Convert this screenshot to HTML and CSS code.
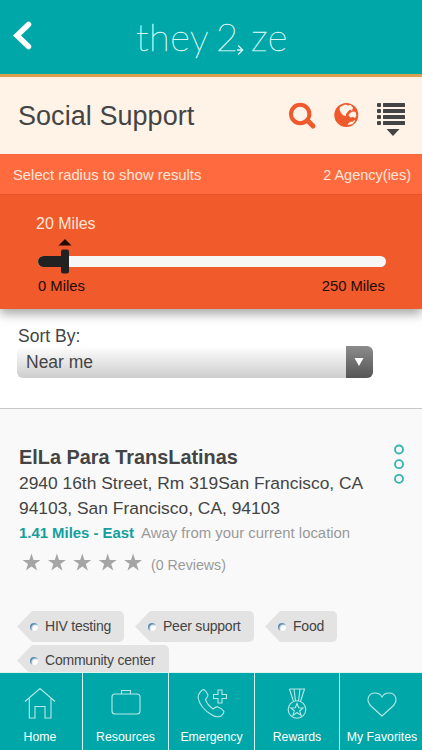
FILE: index.html
```html
<!DOCTYPE html>
<html lang="en">
<head>
<meta charset="utf-8">
<title>Social Support</title>
<link rel="stylesheet" href="styles.css">
</head>
<body>
<div class="app">
  <header class="top">
    <svg class="back" width="22" height="30" viewBox="0 0 22 30"><path d="M17.500 3.500 6 14.500 17.500 25.500" fill="none" stroke="#fff" stroke-width="5.500" stroke-linecap="round" stroke-linejoin="miter"/></svg>
    <div class="logo"><span class="l1">they</span><span class="l2">2</span><svg class="arrow" width="7" height="12" viewBox="0 0 7 12"><path d="M0 6H5.500M1.200 1.500 5.700 6 1.200 10.500" fill="none" stroke="#d5f4f2" stroke-width="1.300"/></svg><span class="l3">ze</span></div>
  </header>
  <section class="title">
    <h1>Social Support</h1>
    <svg class="tools" width="120" height="40" viewBox="0 0 120 40">
      <g fill="none" stroke="#ee5a2c" stroke-width="4"><circle cx="13.200" cy="15" r="9.200"/><path d="m20.500 21.500 5.500 5.500" stroke-width="5" stroke-linecap="round"/></g>
      <circle cx="59.300" cy="16" r="12" fill="#ee5a2c"/>
      <path fill="#fff3e8" d="m53 8 4-2 2-.5 1.500 1 3-.5 2.500 2.500-1 3.500-2-1.500-2 2-2 2.500 0 2-2.500-.5-2.500-2.500-1.500-3.500zM66 12.500l2.500.5 1 3.500-1.500 2.500-2-1-2.500.5-2-2 1.500-2.500zM60.500 25l2.500-2 3-.5 1.500-1.500.5 1-2.500 3-4 1z"/>
      <g fill="#444"><rect x="90" y="4" width="4" height="4" rx="1"/><rect x="96" y="4" width="22" height="4" rx=".5"/><rect x="90" y="10" width="4" height="4" rx="1"/><rect x="96" y="10" width="22" height="4" rx=".5"/><rect x="90" y="16" width="4" height="4" rx="1"/><rect x="96" y="16" width="22" height="4" rx=".5"/><rect x="90" y="22" width="4" height="4" rx="1"/><rect x="96" y="22" width="22" height="4" rx=".5"/><path d="M99.500 30h13l-6.500 7z"/></g>
    </svg>
  </section>
  <section class="radius">
    <div class="hint"><span>Select radius to show results</span><span class="count">2 Agency(ies)</span></div>
    <div class="range">
      <div class="value">20 Miles</div>
      <svg class="slider" width="350" height="37" viewBox="0 0 350 37"><path d="M21.500 7.500 28 1l6.500 6.500z" fill="#220c05"/><rect x="1" y="18" width="348" height="11" rx="5.500" fill="#f6f6f6"/><path d="M6.500 18H28v11H6.500a5.500 5.500 0 0 1 0-11z" fill="#222"/><rect x="24" y="11.500" width="8" height="24" rx="2" fill="#222"/></svg>
      <div class="ends"><span>0 Miles</span><span>250 Miles</span></div>
    </div>
  </section>
  <section class="sort">
    <label>Sort By:</label>
    <div class="select"><span>Near me</span><i><svg width="10" height="10" viewBox="0 0 10 10"><path d="M.5 1h9L5 9z" fill="#fff"/></svg></i></div>
  </section>
  <main class="card">
    <div class="info">
      <h2>ElLa Para TransLatinas</h2>
      <p class="addr">2940 16th Street, Rm 319San Francisco, CA<br>94103, San Francisco, CA, 94103</p>
      <p class="dist"><b>1.41 Miles - East</b><span>Away from your current location</span></p>
      <div class="rating">
        <svg width="124" height="20" viewBox="0 0 124 20"><defs><path id="s" d="m9 0 2.100 6.500H18l-5.500 4 2.100 6.500L9 13l-5.600 4 2.100-6.500L0 6.500h6.900z"/></defs><g fill="#a5a5a5"><use href="#s" x="3.500" y="2.500"/><use href="#s" x="28.900" y="2.500"/><use href="#s" x="54.300" y="2.500"/><use href="#s" x="79.700" y="2.500"/><use href="#s" x="105.100" y="2.500"/></g></svg>
        <span>(0 Reviews)</span>
      </div>
    </div>
    <svg class="more" width="12" height="42" viewBox="0 0 12 42"><g fill="none" stroke="#35b2b0" stroke-width="1.800"><circle cx="6" cy="6.500" r="4"/><circle cx="6" cy="21.200" r="4"/><circle cx="6" cy="35.800" r="4"/></g></svg>
    <div class="tags">
      <span class="tag t1"><i></i>HIV testing</span><span class="tag t2"><i></i>Peer support</span><span class="tag t3"><i></i>Food</span><span class="tag t4"><i></i>Community center</span>
    </div>
  </main>
  <nav>
    <a><svg viewBox="0 0 40 36"><path d="m5 15.500 15-13 15 13M9.300 12v20H15V20.500h10V32h6V12"/></svg><span>Home</span></a>
    <a><svg viewBox="0 0 40 36"><rect x="6" y="8" width="28" height="20" rx="3"/><path d="M15.500 8V4.500h9V8"/></svg><span>Resources</span></a>
    <a><svg viewBox="0 0 40 36"><path d="M8 6.500q1.500-2.500 3.500-3 2 .5 4.500 5.500 0 2-2.500 4.500 1.500 5 7.500 9.500 3-2.500 5-2 4 1.500 6 4.500 0 2-3 4.500-4 2-9-1Q8 22 6 11.500q0-3 2-5zM26 4h4v4.500h4.500v4H30V17h-4v-4.500h-4.500v-4H26z"/></svg><span>Emergency</span></a>
    <a><svg viewBox="0 0 40 36"><path d="M12.500 3h15l-4 12.500M12.500 3l4 12.500M17 3l1.500 12M23 3l-1.500 12"/><circle cx="20" cy="23.500" r="8.800"/><path d="m20 17.500 1.700 4.200 4.500.2-3.500 2.900 1.300 4.400-4-2.500-4 2.500 1.300-4.400-3.500-2.900 4.500-.2z"/></svg><span>Rewards</span></a>
    <a><svg viewBox="0 0 40 36"><path d="M20 30 9.500 20.500C3 14 6.500 7 13 7q5 0 7 4 2-4 7-4c6.500 0 10 7 3.500 13.500z"/></svg><span>My Favorites</span></a>
  </nav>
</div>
</body>
</html>
```
FILE: styles.css
```css
* { box-sizing: border-box; }
body { margin: 0; font-family: "Liberation Sans", Arial, sans-serif; color: #444; }
.app { width: 422px; height: 750px; display: flex; flex-direction: column; overflow: hidden; background: #fff; white-space: nowrap; }
svg { display: block; flex: none; }
h1, h2, p { margin: 0; font-weight: normal; }
.top { height: 77px; flex: none; background: #00a7a8; border-bottom: 3px solid #dda052; display: flex; padding: 21px 0 0 11px; }
.logo { display: flex; margin-left: 103px; height: 45px; font: 100 38px/38px Lato, sans-serif; color: #d5f4f2; -webkit-text-stroke: .5px #d5f4f2; margin-top: -4px; }
.l1 { letter-spacing: .5px; }
.l2 { margin-left: 7px; }
.arrow { margin: 27px 0 0 -1px; }
.l3 { margin-left: 7px; letter-spacing: .5px; }
.title { height: 77px; flex: none; background: #fff3e8; display: flex; justify-content: space-between; padding: 22px 15px 0 18px; position: relative; z-index: 1; }
h1 { font-size: 27px; line-height: 34px; letter-spacing: .05px; }
.radius { height: 155px; flex: none; background: #f15a2b; box-shadow: 0 5px 10px rgba(0,0,0,.35); position: relative; color: #ffe6da; }
.hint { height: 41px; background: #ff6b3f; border-top: 1px solid #f5663c; border-bottom: 1px solid #e65429; display: flex; justify-content: space-between; padding: 0 11px 0 13px; font-size: 14.800px; line-height: 40px; }
.count { font-size: 14.500px; }
.range { padding: 18px 36px 0 36px; }
.value { font-size: 16px; line-height: 22px; }
.slider { margin: 3px 0 0 1px; }
.ends { display: flex; justify-content: space-between; font-size: 14.800px; line-height: 22px; color: #220c05; padding: 0 1px 0 2px; }
.sort { height: 99px; flex: none; padding: 15px 49px 0 17px; font-size: 17.500px; }
.sort label { display: block; line-height: 24px; padding-left: 1px; }
.select { height: 32px; margin-top: -2px; border-radius: 6px; background: linear-gradient(#fff, #cdcdcd); display: flex; justify-content: space-between; padding-left: 9px; line-height: 32px; }
.select i { width: 27px; background: linear-gradient(#8c8c8c, #555); border-radius: 0 6px 6px 0; display: flex; align-items: center; justify-content: center; padding-right: 2px; }
.card { height: 264px; flex: none; background: #f9f9f9; border-top: 1px solid #c8c8c8; padding: 35px 18px 0 17px; display: grid; grid-template-columns: 376px 12px; grid-template-rows: 167px 80px; overflow: hidden; }
.info { padding-left: 2px; }
h2 { font-size: 19.900px; line-height: 26px; font-weight: bold; }
.addr { font-size: 17.400px; line-height: 24.500px; margin-top: 1px; }
.dist { font-size: 14.900px; line-height: 24px; color: #999; margin-top: .5px; }
.dist b { color: #149f9e; margin-right: 7px; }
.rating { display: flex; color: #999; font-size: 14.200px; line-height: 24px; margin-top: 6px; }
.rating span { margin: 2px 0 0 8px; }
.more { margin: -1px 0 0 0; }
.tags { grid-column: 1 / 3; display: flex; flex-wrap: wrap; align-content: flex-start; gap: 3px 11px; }
.tag { height: 31px; background: #e3e3e3; clip-path: polygon(0 50%, 15px 0, 100% 0, 100% 100%, 15px 100%); border-radius: 5px; font-size: 14px; letter-spacing: -.22px; line-height: 31px; padding-left: 13px; display: flex; align-items: center; }
.tag i { width: 8px; height: 8px; border-radius: 50%; background: #fff; box-shadow: inset 1.500px 1.500px 1.500px #4c83ab; margin-right: 7px; }
.t1 { width: 107px; }
.t2 { width: 119px; }
.t3 { width: 72px; }
.t4 { width: 152px; }
nav { height: 78px; flex: none; background: #d9f4f2; display: grid; grid-template-columns: 82px 85px 85px 84px 82px; gap: 1px; padding-top: 1px; }
nav a { background: #00a7a8; color: #fff; font-size: 12.300px; display: flex; flex-direction: column; align-items: center; padding-top: 13px; min-width: 0; }
nav svg { width: 40px; height: 36px; fill: none; stroke: #b7e8e6; stroke-width: 1.100; }
nav span { line-height: 16px; margin-top: 7px; }
nav a:first-child svg, nav a:first-child span { transform: translateX(-1px); }
nav a:last-child svg, nav a:last-child span { transform: translateX(1px); }
```
